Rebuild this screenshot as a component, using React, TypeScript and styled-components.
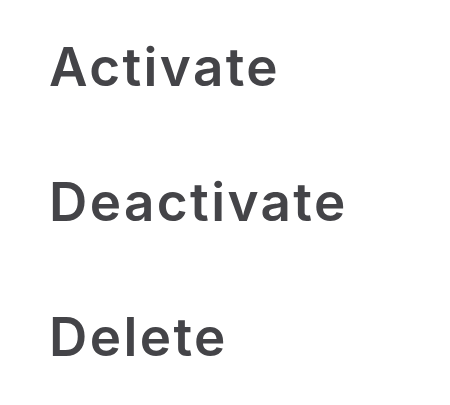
import React from 'react';
import styled, { createGlobalStyle } from 'styled-components';

const GlobalStyle = createGlobalStyle`
  html, body {
    margin: 0;
    padding: 0;
    background: #ffffff;
  }
`;

const Menu = styled.ul`
  list-style: none;
  margin: 0;
  padding: 41px 0 0 49px;
  display: flex;
  flex-direction: column;
  gap: 82px;
`;

const MenuItem = styled.li`
  font-family: Inter, 'Noto Sans', sans-serif;
  font-weight: 600;
  font-size: 53px;
  line-height: 53px;
  letter-spacing: 2.4px;
  color: #444448;
  cursor: pointer;
`;

const items = ['Activate', 'Deactivate', 'Delete'];

const App: React.FC = () => {
  return <>
    <GlobalStyle />
    <Menu>
      {items.map((label) => <MenuItem key={label}>{label}</MenuItem>)}
    </Menu>
  </>;
};

export default App;
